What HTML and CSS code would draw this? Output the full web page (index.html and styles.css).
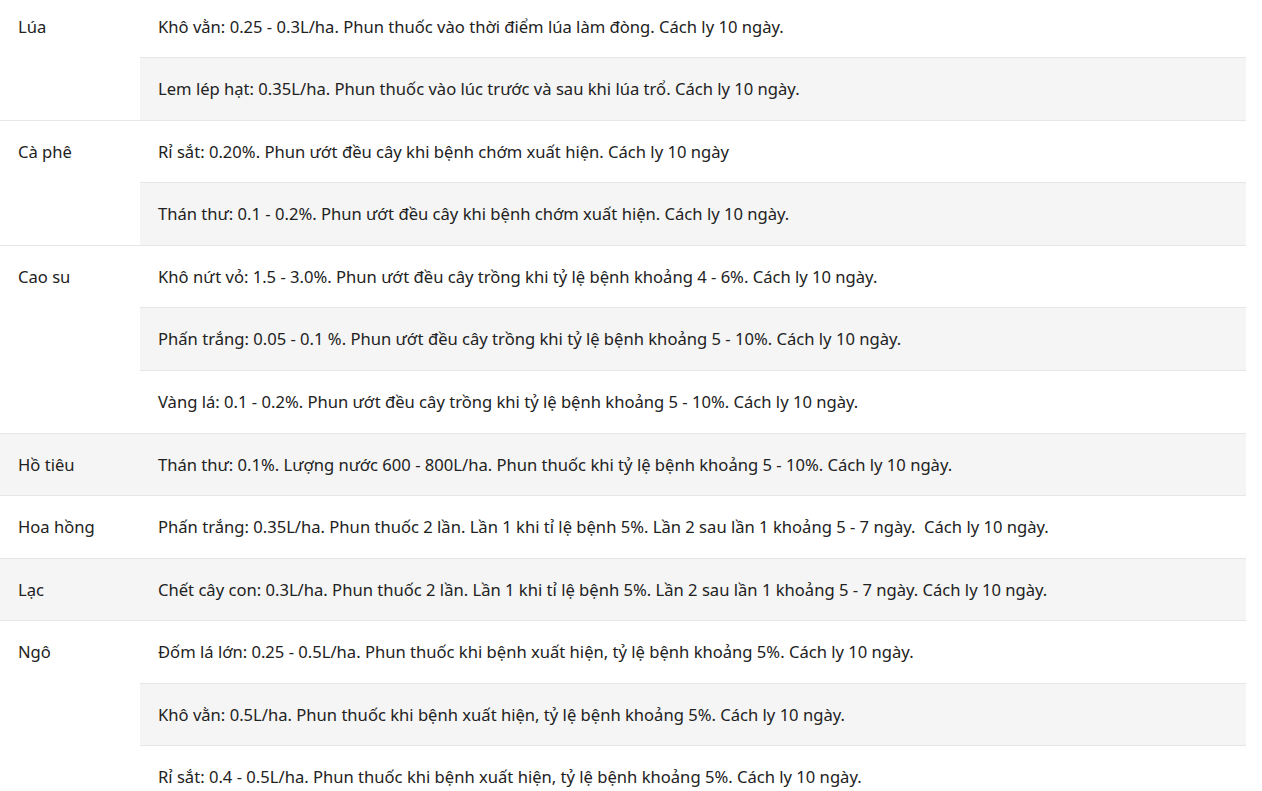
FILE: index.html
```html
<!DOCTYPE html>
<html lang="vi">
<head>
<meta charset="utf-8">
<title>Cách dùng</title>
<link rel="stylesheet" href="styles.css">
</head>
<body>
<table class="usage">
  <tbody>
    <tr><td class="crop" rowspan="2">Lúa</td><td>Khô vằn: 0.25 - 0.3L/ha. Phun thuốc vào thời điểm lúa làm đòng. Cách ly 10 ngày.</td></tr>
    <tr><td>Lem lép hạt: 0.35L/ha. Phun thuốc vào lúc trước và sau khi lúa trổ. Cách ly 10 ngày.</td></tr>
    <tr><td class="crop" rowspan="2">Cà phê</td><td>Rỉ sắt: 0.20%. Phun ướt đều cây khi bệnh chớm xuất hiện. Cách ly 10 ngày</td></tr>
    <tr><td>Thán thư: 0.1 - 0.2%. Phun ướt đều cây khi bệnh chớm xuất hiện. Cách ly 10 ngày.</td></tr>
    <tr><td class="crop" rowspan="3">Cao su</td><td>Khô nứt vỏ: 1.5 - 3.0%. Phun ướt đều cây trồng khi tỷ lệ bệnh khoảng 4 - 6%. Cách ly 10 ngày.</td></tr>
    <tr><td>Phấn trắng: 0.05 - 0.1 %. Phun ướt đều cây trồng khi tỷ lệ bệnh khoảng 5 - 10%. Cách ly 10 ngày.</td></tr>
    <tr><td>Vàng lá: 0.1 - 0.2%. Phun ướt đều cây trồng khi tỷ lệ bệnh khoảng 5 - 10%. Cách ly 10 ngày.</td></tr>
    <tr><td class="crop">Hồ tiêu</td><td>Thán thư: 0.1%. Lượng nước 600 - 800L/ha. Phun thuốc khi tỷ lệ bệnh khoảng 5 - 10%. Cách ly 10 ngày.</td></tr>
    <tr><td class="crop">Hoa hồng</td><td>Phấn trắng: 0.35L/ha. Phun thuốc 2 lần. Lần 1 khi tỉ lệ bệnh 5%. Lần 2 sau lần 1 khoảng 5 - 7 ngày.&nbsp; Cách ly 10 ngày.</td></tr>
    <tr><td class="crop">Lạc</td><td>Chết cây con: 0.3L/ha. Phun thuốc 2 lần. Lần 1 khi tỉ lệ bệnh 5%. Lần 2 sau lần 1 khoảng 5 - 7 ngày. Cách ly 10 ngày.</td></tr>
    <tr><td class="crop" rowspan="3">Ngô</td><td>Đốm lá lớn: 0.25 - 0.5L/ha. Phun thuốc khi bệnh xuất hiện, tỷ lệ bệnh khoảng 5%. Cách ly 10 ngày.</td></tr>
    <tr><td>Khô vằn: 0.5L/ha. Phun thuốc khi bệnh xuất hiện, tỷ lệ bệnh khoảng 5%. Cách ly 10 ngày.</td></tr>
    <tr><td>Rỉ sắt: 0.4 - 0.5L/ha. Phun thuốc khi bệnh xuất hiện, tỷ lệ bệnh khoảng 5%. Cách ly 10 ngày.</td></tr>
  </tbody>
</table>
</body>
</html>
```
FILE: styles.css
```css
html, body {
  margin: 0;
  padding: 0;
  background: #ffffff;
}
body {
  font-family: "Noto Sans", "Open Sans", sans-serif;
  font-size: 16.6px;
  color: #222222;
}
.usage {
  width: 1246px;
  border-collapse: collapse;
  margin-top: -4.25px;
}
.usage td {
  padding: 18px 18px 18.05px;
  line-height: 25.5px;
  border-bottom: 1px solid #e6e6e6;
  vertical-align: top;
  text-align: left;
}
.usage td.crop {
  width: 104px;
}
.usage tr:nth-child(even) {
  background: #f5f5f5;
}
```
